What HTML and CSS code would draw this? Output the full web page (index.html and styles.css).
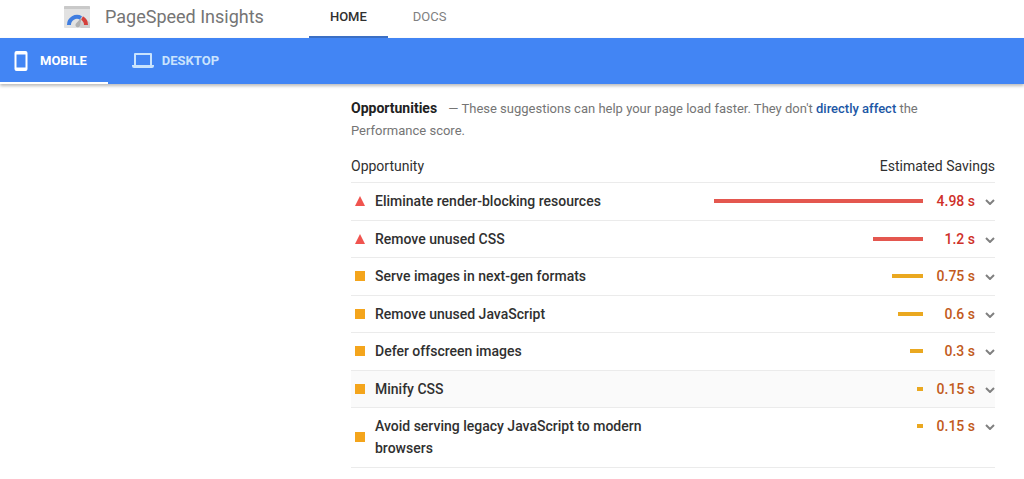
FILE: index.html
```
<!DOCTYPE html>
<html lang="en">
  <head>
    <meta charset="UTF-8" />
    <meta name="viewport" content="width=device-width, initial-scale=1.0" />
    <title>PageSpeed Insights</title>
    <link rel="stylesheet" href="styles.css">
  </head>
  <body>
    <header class="header">
      <a class="logo" href="#">
        <svg width="28" height="24" viewBox="0 0 28 24">
          <rect x="1" y="1" width="26" height="22" rx="1" fill="#e2e2e2" />
          <path d="M1 4V2a1 1 0 0 1 1-1h24a1 1 0 0 1 1 1v2z" fill="#c9c9c9" />
          <path d="M16 21l5-9 6 6v5h-9z" fill="#cfcfcf" />
          <path d="M6 20a8 8 0 0 1 12-7" fill="none" stroke="#3f7de0" stroke-width="4" />
          <path d="M19 13a8 8 0 0 1 4 7" fill="none" stroke="#d5403c" stroke-width="4" />
          <path d="M19 12l-2 8.500a2.300 2.300 0 1 1-4-2z" fill="#b0b0b0" />
        </svg>
        <span>PageSpeed Insights</span>
      </a>
      <nav class="nav">
        <a class="nav-link active" href="#">HOME</a>
        <a class="nav-link" href="#">DOCS</a>
      </nav>
    </header>

    <div class="tabs" role="tablist">
      <button class="tab active" type="button" role="tab" aria-selected="true">
        <svg width="22" height="22" viewBox="0 0 22 22">
          <path fill-rule="evenodd" d="M6.500 1h9A2 2 0 0 1 17.500 3v16a2 2 0 0 1-2 2h-9a2 2 0 0 1-2-2V3a2 2 0 0 1 2-2zM6.500 4.500v13h9v-13z" fill="#fff" />
        </svg>
        MOBILE
      </button>
      <button class="tab" type="button" role="tab" aria-selected="false">
        <svg width="22" height="22" viewBox="0 0 22 22">
          <path fill-rule="evenodd" d="M3 3h16a1 1 0 0 1 1 1v11h2v1a2 2 0 0 1-2 2H2a2 2 0 0 1-2-2v-1h2V4a1 1 0 0 1 1-1zM4 5v10h14V5z" fill="currentColor" />
        </svg>
        DESKTOP
      </button>
    </div>

    <main class="report">
      <div class="intro">
        <h2>Opportunities</h2>
        <p>— These suggestions can help your page load faster. They don't <a href="#">directly affect</a> the Performance score.</p>
      </div>

      <table class="audits">
        <colgroup>
          <col class="col-icon">
          <col>
          <col class="col-bar">
          <col class="col-time">
          <col class="col-toggle">
        </colgroup>
        <thead>
          <tr>
            <th colspan="2">Opportunity</th>
            <th class="savings" colspan="3">Estimated Savings</th>
          </tr>
        </thead>
        <tbody>
          <tr class="fail">
            <td class="icon"><span class="triangle"></span></td>
            <td class="name">Eliminate render-blocking resources</td>
            <td class="bar"><div style="width: 100%"></div></td>
            <td class="time">4.98 s</td>
            <td class="toggle"><button type="button" aria-label="Show details"><svg width="10" height="6" viewBox="0 0 10 6"><path d="M1 1l4 4 4-4" /></svg></button></td>
          </tr>
          <tr class="fail">
            <td class="icon"><span class="triangle"></span></td>
            <td class="name">Remove unused CSS</td>
            <td class="bar"><div style="width: 24%"></div></td>
            <td class="time">1.2 s</td>
            <td class="toggle"><button type="button" aria-label="Show details"><svg width="10" height="6" viewBox="0 0 10 6"><path d="M1 1l4 4 4-4" /></svg></button></td>
          </tr>
          <tr class="average">
            <td class="icon"><span class="square"></span></td>
            <td class="name">Serve images in next-gen formats</td>
            <td class="bar"><div style="width: 15%"></div></td>
            <td class="time">0.75 s</td>
            <td class="toggle"><button type="button" aria-label="Show details"><svg width="10" height="6" viewBox="0 0 10 6"><path d="M1 1l4 4 4-4" /></svg></button></td>
          </tr>
          <tr class="average">
            <td class="icon"><span class="square"></span></td>
            <td class="name">Remove unused JavaScript</td>
            <td class="bar"><div style="width: 12%"></div></td>
            <td class="time">0.6 s</td>
            <td class="toggle"><button type="button" aria-label="Show details"><svg width="10" height="6" viewBox="0 0 10 6"><path d="M1 1l4 4 4-4" /></svg></button></td>
          </tr>
          <tr class="average">
            <td class="icon"><span class="square"></span></td>
            <td class="name">Defer offscreen images</td>
            <td class="bar"><div style="width: 6%"></div></td>
            <td class="time">0.3 s</td>
            <td class="toggle"><button type="button" aria-label="Show details"><svg width="10" height="6" viewBox="0 0 10 6"><path d="M1 1l4 4 4-4" /></svg></button></td>
          </tr>
          <tr class="average selected">
            <td class="icon"><span class="square"></span></td>
            <td class="name">Minify CSS</td>
            <td class="bar"><div style="width: 3%"></div></td>
            <td class="time">0.15 s</td>
            <td class="toggle"><button type="button" aria-label="Show details"><svg width="10" height="6" viewBox="0 0 10 6"><path d="M1 1l4 4 4-4" /></svg></button></td>
          </tr>
          <tr class="average">
            <td class="icon"><span class="square"></span></td>
            <td class="name">Avoid serving legacy JavaScript to modern browsers</td>
            <td class="bar"><div style="width: 3%"></div></td>
            <td class="time">0.15 s</td>
            <td class="toggle"><button type="button" aria-label="Show details"><svg width="10" height="6" viewBox="0 0 10 6"><path d="M1 1l4 4 4-4" /></svg></button></td>
          </tr>
        </tbody>
      </table>
    </main>
  </body>
</html>
```
FILE: styles.css
```
* {
  box-sizing: border-box;
}
body {
  margin: 0;
  background-color: #fff;
  color: #303030;
  font-family: Roboto, "Liberation Sans", sans-serif;
  font-size: 14px;
  line-height: 22px;
}
a {
  text-decoration: none;
}
button {
  border: 0;
  padding: 0;
  background: none;
  font: inherit;
  cursor: pointer;
}

/* header */
.header {
  display: flex;
  height: 38px;
  padding-left: 63px;
}
.logo {
  display: flex;
  align-items: center;
  gap: 14px;
  height: 34px;
  color: #757575;
  font-size: 18px;
}
.nav {
  display: flex;
  gap: 4px;
  margin-left: 45px;
}
.nav-link {
  height: 38px;
  padding: 0 21px;
  color: #808080;
  font-size: 13px;
  line-height: 34px;
}
.nav-link.active {
  border-bottom: 2px solid #3b6fc4;
  color: #303030;
  font-weight: 500;
}

/* mobile / desktop */
.tabs {
  display: flex;
  gap: 24px;
  height: 46px;
  background-color: #4285f4;
  box-shadow: 0 2px 3px #0004;
}
.tab {
  display: flex;
  align-items: center;
  gap: 8px;
  padding-top: 2px;
  padding-right: 21px;
  border-bottom: 2px solid transparent;
  color: #c9e3fd;
  font-size: 13px;
  font-weight: 700;
}
.tab.active {
  padding-left: 10px;
  border-bottom-color: #fff;
  color: #fff;
}

/* report */
.report {
  padding: 13px 29px 12px 351px;
}
.intro {
  padding-right: 60px;
  color: #757575;
  font-size: 13px;
}
.intro h2 {
  display: inline;
  margin: 0 8px 0 0;
  color: #212121;
  font-size: 14px;
  font-weight: 700;
}
.intro p {
  display: inline;
}
.intro a {
  color: #1c57a5;
  font-weight: 500;
}
.audits {
  width: 100%;
  margin-top: 13px;
  border-spacing: 0;
  table-layout: fixed;
}
.col-icon {
  width: 24px;
}
.col-bar {
  width: 209px;
}
.col-time {
  width: 52px;
}
.col-toggle {
  width: 20px;
}
.audits th {
  padding: 0 0 5px;
  border-bottom: 1px solid #ebebeb;
  font-weight: 400;
  text-align: left;
}
.audits th.savings {
  text-align: right;
}
.audits td {
  padding: 7px 0 8px;
  border-bottom: 1px solid #ebebeb;
  font-weight: 500;
  vertical-align: top;
}
.audits tr:nth-child(even) td {
  padding-bottom: 7px;
}
.audits .name {
  padding-right: 40px;
}
.audits .selected {
  background-color: #fafafa;
}
.audits .icon {
  padding-left: 4px;
  line-height: 10px;
  vertical-align: middle;
}
.triangle {
  display: inline-block;
  border: 5px solid transparent;
  border-top: 0;
  border-bottom: 10px solid #f0544f;
}
.square {
  display: inline-block;
  width: 10px;
  height: 10px;
  background-color: #f4a51c;
}
.bar div {
  height: 4px;
  margin: 9px 0 0 auto;
}
.fail .bar div {
  background-color: #e4574f;
}
.average .bar div {
  background-color: #eaa820;
}
.audits .time {
  text-align: right;
}
.fail .time {
  color: #cf3029;
}
.average .time {
  color: #c25a20;
}
.audits .toggle {
  text-align: right;
}
.toggle svg {
  vertical-align: 1px;
  fill: none;
  stroke: #808080;
  stroke-width: 2;
}
```
